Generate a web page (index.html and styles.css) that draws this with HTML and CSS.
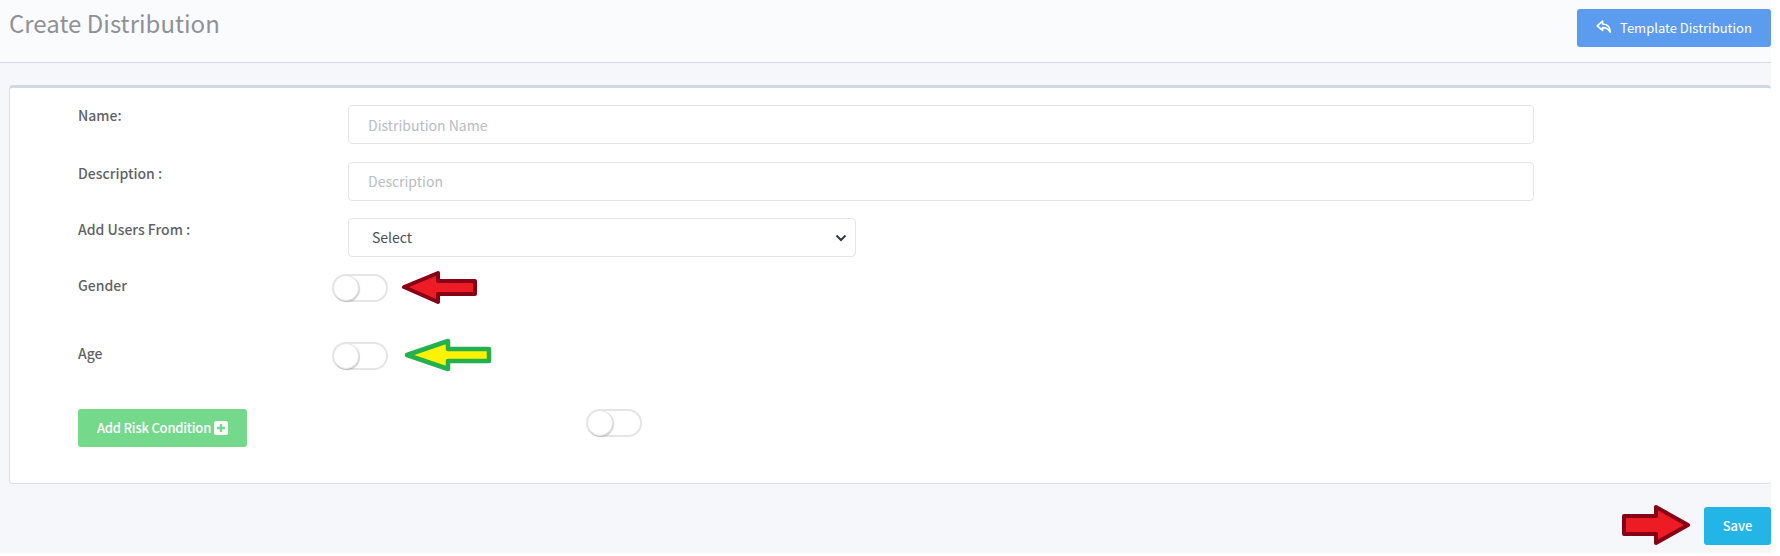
FILE: index.html
```html
<!DOCTYPE html>
<html lang="en">
<head>
<meta charset="utf-8">
<title>Create Distribution</title>
<link rel="stylesheet" href="styles.css">
</head>
<body>
<div class="page">
  <header class="head">
    <h1 class="title">Create Distribution</h1>
    <button class="btn btn-blue" type="button">
      <svg class="reply" viewBox="0 0 16 14" aria-hidden="true"><path d="M6.6 1.2 1.2 5.8l5.4 4.6V7.600c3-.1 5.400.5 7.600 4.400 0-4.400-2.600-7.700-7.600-8z" fill="none" stroke="currentColor" stroke-width="1.700" stroke-linejoin="round"/></svg>
      Template Distribution
    </button>
  </header>
  <main class="main">
    <section class="card">
      <div class="row row-name">
        <label class="label">Name:</label>
        <input class="field" type="text" placeholder="Distribution Name">
      </div>
      <div class="row row-desc">
        <label class="label">Description :</label>
        <input class="field field-up" type="text" placeholder="Description">
      </div>
      <div class="row row-select">
        <label class="label">Add Users From :</label>
        <div class="select">
          <span>Select</span>
          <svg class="chev" viewBox="0 0 12 8" aria-hidden="true"><path d="M1.500 1.500 6 6l4.500-4.500" fill="none" stroke="currentColor" stroke-width="2"/></svg>
        </div>
      </div>
      <div class="row-switch row-gender">
        <span class="label">Gender</span>
        <span class="switch"><span class="knob"></span></span>
      </div>
      <div class="row-switch row-age">
        <span class="label">Age</span>
        <span class="switch"><span class="knob"></span></span>
      </div>
      <div class="row-risk">
        <button class="btn btn-green" type="button">Add Risk Condition
          <svg class="plus" viewBox="0 0 14 14" aria-hidden="true"><rect width="14" height="14" rx="2.500" fill="currentColor"/><path d="M7 3v8M3 7h8" stroke="#75d98b" stroke-width="2.400"/></svg>
        </button>
        <span class="switch"><span class="knob"></span></span>
      </div>
    </section>
    <div class="foot">
      <button class="btn btn-save" type="button">Save</button>
    </div>
    <svg class="arrow arrow-gender" viewBox="0 0 76 34" aria-hidden="true"><path d="M2 17 36 3v8h37v13H36v8z" fill="#ed1c24" stroke="#880015" stroke-width="4" stroke-linejoin="round"/></svg>
    <svg class="arrow arrow-age" viewBox="0 0 88 34" aria-hidden="true"><path d="M3 17 44 3v8h41v12H44v8z" fill="#fff200" stroke="#22b14c" stroke-width="4.500" stroke-linejoin="round"/></svg>
    <svg class="arrow arrow-save" viewBox="0 0 68 42" aria-hidden="true"><path d="M66 21 34 3v9H2v18h32v9z" fill="#ed1c24" stroke="#880015" stroke-width="4" stroke-linejoin="round"/></svg>
  </main>
</div>
</body>
</html>
```
FILE: styles.css
```css
* { box-sizing: border-box; }
html, body { margin: 0; padding: 0; background: #fff; }
body { font-family: "Noto Sans CJK SC", "Noto Sans", sans-serif; color: #5f6368; }
.page { width: 1771px; height: 553px; background: #f5f7fb; }
.head {
  height: 63px;
  background: #fafbfd;
  border-bottom: 1px solid #d3dce8;
  display: flex;
  justify-content: space-between;
  align-items: flex-start;
  padding: 9px 0 0 9px;
}
.title { margin: -1px 0 0; font-size: 24px; line-height: 30px; font-weight: 400; color: #8f9196; }
.btn {
  border: 0;
  border-radius: 3px;
  color: #fff;
  font: 400 13px/20px "Noto Sans CJK SC", "Noto Sans", sans-serif;
  display: inline-flex;
  align-items: center;
  justify-content: center;
  padding: 0;
}
.btn-blue { width: 194px; height: 38px; background: #5c9cee; gap: 8px; }
.reply { width: 16px; height: 14px; margin-top: -3px; }
.main { position: relative; padding: 22px 0 0 9px; }
.card {
  height: 399px;
  background: #fff;
  border: 1px solid #d8e0e8;
  border-top: 3px solid #ced9e1;
  border-right: 0;
  border-radius: 4px;
  padding: 17px 0 0 68px;
}
.row { display: grid; grid-template-columns: 270px 1186px; }
.row-name { margin-bottom: 18px; }
.row-desc { margin-bottom: 17px; }
.row-select { margin-bottom: 17px; }
.label { font-size: 14px; line-height: 20px; font-weight: 500; color: #5f6368; }
.row-desc .label, .row-select .label { margin-top: 1px; }
.field, .select {
  height: 39px;
  border: 1px solid #e3e5e8;
  border-radius: 4px;
  background: #fff;
  font: 400 14px/20px "Noto Sans CJK SC", "Noto Sans", sans-serif;
}
.field { width: 1186px; padding: 0 19px; color: #5f6368; outline: 0; }
.field-up { padding-bottom: 2px; }
.field::placeholder { color: #b9bcc2; opacity: 1; }
.select {
  width: 508px;
  display: flex;
  align-items: center;
  justify-content: space-between;
  padding: 0 8px 2px 23px;
  color: #495057;
}
.chev { width: 12px; height: 8px; color: #343a40; margin-top: 2px; }
.row-switch { display: grid; grid-template-columns: 254px 56px; align-items: start; }
.row-switch .label { margin-top: 1px; }
.row-gender { margin-bottom: 40px; }
.row-age { margin-bottom: 39px; }
.switch {
  display: block;
  width: 56px;
  height: 28px;
  background: #fff;
  border: 2px solid #e4e5e7;
  border-radius: 14px;
}
.knob {
  display: block;
  width: 26px;
  height: 26px;
  margin: -1px;
  background: #fff;
  border: 1px solid #e4e5e7;
  border-radius: 50%;
  box-shadow: 1px 1px 1px rgba(0, 0, 0, .18);
}
.row-risk { display: grid; grid-template-columns: 508px 56px; align-items: start; }
.btn-green { width: 169px; height: 38px; background: #75d98b; gap: 3px; font-weight: 500; letter-spacing: -.2px; }
.plus { width: 14px; height: 14px; }
.foot { display: flex; justify-content: flex-end; padding-top: 23px; }
.btn-save { width: 67px; height: 38px; background: #22b5e5; font-weight: 500; }
.arrow { position: absolute; }
.arrow-gender { left: 402px; top: 207px; width: 76px; height: 34px; }
.arrow-age { left: 404px; top: 275px; width: 88px; height: 34px; }
.arrow-save { left: 1622px; top: 441px; width: 68px; height: 42px; }
```
